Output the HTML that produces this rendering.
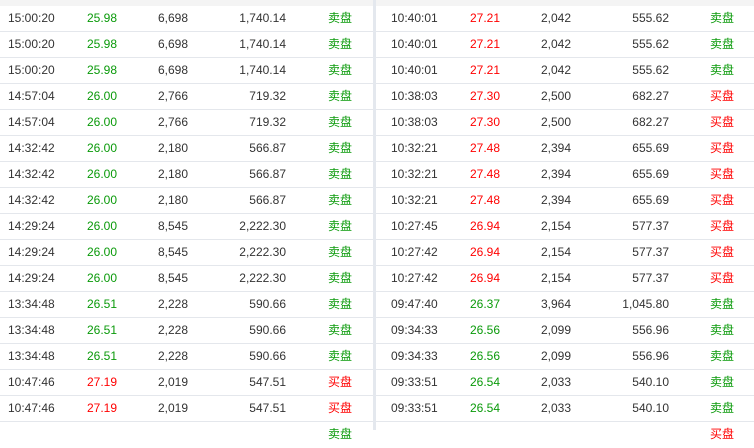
<!DOCTYPE html>
<html><head><meta charset="utf-8"><style>
*{margin:0;padding:0;box-sizing:border-box}
body{width:754px;height:430px;overflow:hidden;background:#fff;font-family:Arial,"Liberation Sans","Noto Sans CJK SC",sans-serif;font-size:12px;color:#333;position:relative}
.top{position:absolute;left:0;top:0;width:754px;height:6px;background:#f4f4f4}
.div{position:absolute;left:373px;top:0;width:3px;height:430px;background:#e4e8ee}
.r{position:absolute;left:0;width:754px;height:26px;border-bottom:1px solid #e4e7ec}
.r span{position:absolute;top:0;line-height:25px;white-space:nowrap}
.g{color:#0a9a0a}.d{color:#f00}
.a{left:8px}.b{left:87px}.c{left:120px;width:68px;text-align:right}.e{left:200px;width:86px;text-align:right}.f{left:328px}
.h{left:391px}.i{left:470px}.j{left:500px;width:71px;text-align:right}.k{left:580px;width:89px;text-align:right}.l{left:710px}
</style></head><body>
<div class="top"></div>
<div class="r" style="top:6px"><span class="a">15:00:20</span><span class="b g">25.98</span><span class="c">6,698</span><span class="e">1,740.14</span><span class="f g">卖盘</span><span class="h">10:40:01</span><span class="i d">27.21</span><span class="j">2,042</span><span class="k">555.62</span><span class="l g">卖盘</span></div>
<div class="r" style="top:32px"><span class="a">15:00:20</span><span class="b g">25.98</span><span class="c">6,698</span><span class="e">1,740.14</span><span class="f g">卖盘</span><span class="h">10:40:01</span><span class="i d">27.21</span><span class="j">2,042</span><span class="k">555.62</span><span class="l g">卖盘</span></div>
<div class="r" style="top:58px"><span class="a">15:00:20</span><span class="b g">25.98</span><span class="c">6,698</span><span class="e">1,740.14</span><span class="f g">卖盘</span><span class="h">10:40:01</span><span class="i d">27.21</span><span class="j">2,042</span><span class="k">555.62</span><span class="l g">卖盘</span></div>
<div class="r" style="top:84px"><span class="a">14:57:04</span><span class="b g">26.00</span><span class="c">2,766</span><span class="e">719.32</span><span class="f g">卖盘</span><span class="h">10:38:03</span><span class="i d">27.30</span><span class="j">2,500</span><span class="k">682.27</span><span class="l d">买盘</span></div>
<div class="r" style="top:110px"><span class="a">14:57:04</span><span class="b g">26.00</span><span class="c">2,766</span><span class="e">719.32</span><span class="f g">卖盘</span><span class="h">10:38:03</span><span class="i d">27.30</span><span class="j">2,500</span><span class="k">682.27</span><span class="l d">买盘</span></div>
<div class="r" style="top:136px"><span class="a">14:32:42</span><span class="b g">26.00</span><span class="c">2,180</span><span class="e">566.87</span><span class="f g">卖盘</span><span class="h">10:32:21</span><span class="i d">27.48</span><span class="j">2,394</span><span class="k">655.69</span><span class="l d">买盘</span></div>
<div class="r" style="top:162px"><span class="a">14:32:42</span><span class="b g">26.00</span><span class="c">2,180</span><span class="e">566.87</span><span class="f g">卖盘</span><span class="h">10:32:21</span><span class="i d">27.48</span><span class="j">2,394</span><span class="k">655.69</span><span class="l d">买盘</span></div>
<div class="r" style="top:188px"><span class="a">14:32:42</span><span class="b g">26.00</span><span class="c">2,180</span><span class="e">566.87</span><span class="f g">卖盘</span><span class="h">10:32:21</span><span class="i d">27.48</span><span class="j">2,394</span><span class="k">655.69</span><span class="l d">买盘</span></div>
<div class="r" style="top:214px"><span class="a">14:29:24</span><span class="b g">26.00</span><span class="c">8,545</span><span class="e">2,222.30</span><span class="f g">卖盘</span><span class="h">10:27:45</span><span class="i d">26.94</span><span class="j">2,154</span><span class="k">577.37</span><span class="l d">买盘</span></div>
<div class="r" style="top:240px"><span class="a">14:29:24</span><span class="b g">26.00</span><span class="c">8,545</span><span class="e">2,222.30</span><span class="f g">卖盘</span><span class="h">10:27:42</span><span class="i d">26.94</span><span class="j">2,154</span><span class="k">577.37</span><span class="l d">买盘</span></div>
<div class="r" style="top:266px"><span class="a">14:29:24</span><span class="b g">26.00</span><span class="c">8,545</span><span class="e">2,222.30</span><span class="f g">卖盘</span><span class="h">10:27:42</span><span class="i d">26.94</span><span class="j">2,154</span><span class="k">577.37</span><span class="l d">买盘</span></div>
<div class="r" style="top:292px"><span class="a">13:34:48</span><span class="b g">26.51</span><span class="c">2,228</span><span class="e">590.66</span><span class="f g">卖盘</span><span class="h">09:47:40</span><span class="i g">26.37</span><span class="j">3,964</span><span class="k">1,045.80</span><span class="l g">卖盘</span></div>
<div class="r" style="top:318px"><span class="a">13:34:48</span><span class="b g">26.51</span><span class="c">2,228</span><span class="e">590.66</span><span class="f g">卖盘</span><span class="h">09:34:33</span><span class="i g">26.56</span><span class="j">2,099</span><span class="k">556.96</span><span class="l g">卖盘</span></div>
<div class="r" style="top:344px"><span class="a">13:34:48</span><span class="b g">26.51</span><span class="c">2,228</span><span class="e">590.66</span><span class="f g">卖盘</span><span class="h">09:34:33</span><span class="i g">26.56</span><span class="j">2,099</span><span class="k">556.96</span><span class="l g">卖盘</span></div>
<div class="r" style="top:370px"><span class="a">10:47:46</span><span class="b d">27.19</span><span class="c">2,019</span><span class="e">547.51</span><span class="f d">买盘</span><span class="h">09:33:51</span><span class="i g">26.54</span><span class="j">2,033</span><span class="k">540.10</span><span class="l g">卖盘</span></div>
<div class="r" style="top:396px"><span class="a">10:47:46</span><span class="b d">27.19</span><span class="c">2,019</span><span class="e">547.51</span><span class="f d">买盘</span><span class="h">09:33:51</span><span class="i g">26.54</span><span class="j">2,033</span><span class="k">540.10</span><span class="l g">卖盘</span></div>
<div class="r" style="top:422px;border:0"><span class="f g">卖盘</span><span class="l d">买盘</span></div>
<div class="div"></div>
</body></html>
